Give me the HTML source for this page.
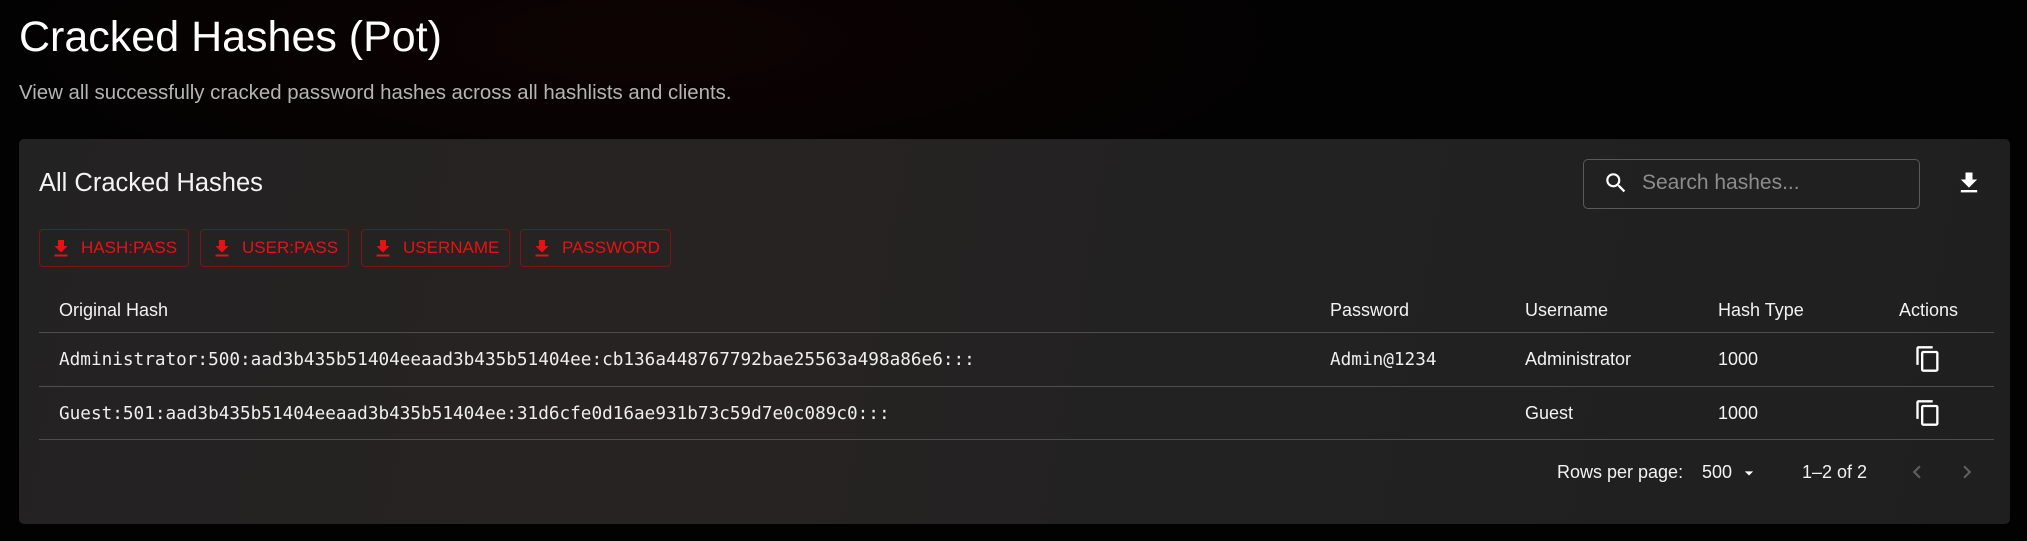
<!DOCTYPE html>
<html><head><meta charset="utf-8"><style>
*{margin:0;padding:0;box-sizing:border-box}
body{width:2027px;height:541px;overflow:hidden;background:#000;font-family:"Liberation Sans",sans-serif;color:#fff;position:relative}
.bg{position:absolute;inset:0;background:radial-gradient(ellipse 900px 250px at 650px 40px,rgba(40,5,5,0.3),rgba(0,0,0,0) 70%),#030202}
.a{position:absolute;white-space:nowrap}
.card{position:absolute;left:19px;top:139px;width:1991px;height:385px;border-radius:5px;background:linear-gradient(100deg,#232222 0%,#272322 35%,#222222 60%,#1f1f1f 100%)}
.btn{position:absolute;top:229px;height:38px;border:1px solid #7c1414;border-radius:4px;color:#e81212;font-size:17px;display:flex;align-items:center;padding-left:13px}
.btn svg{margin-right:12px}
.line{position:absolute;left:39px;width:1955px;height:1px;background:#4e4e4e}
.t{font-size:18px;color:#f2f2f2}
.m{font-family:"DejaVu Sans Mono","Liberation Mono",monospace;font-size:17.7px;letter-spacing:0;color:#eee}
</style></head><body>
<div class="bg"></div>
<div class="a" style="left:19px;top:13px;font-size:43px;color:#fff">Cracked Hashes (Pot)</div>
<div class="a" style="left:19px;top:82px;font-size:20.4px;color:#b4b4b4">View all successfully cracked password hashes across all hashlists and clients.</div>
<div class="card"></div>
<div class="a" style="left:39px;top:169px;font-size:25.5px;color:#f4f4f4">All Cracked Hashes</div>

<div class="btn" style="left:39px;width:150px"><svg width="16" height="18" viewBox="0 0 16 18"><path d="M5 1h6v6h3.5L8 13.5 1.5 7H5z" fill="#e81212"/><rect x="1.5" y="15.5" width="13" height="2" fill="#e81212"/></svg>HASH:PASS</div>
<div class="btn" style="left:200px;width:149px"><svg width="16" height="18" viewBox="0 0 16 18"><path d="M5 1h6v6h3.5L8 13.5 1.5 7H5z" fill="#e81212"/><rect x="1.5" y="15.5" width="13" height="2" fill="#e81212"/></svg>USER:PASS</div>
<div class="btn" style="left:361px;width:149px"><svg width="16" height="18" viewBox="0 0 16 18"><path d="M5 1h6v6h3.5L8 13.5 1.5 7H5z" fill="#e81212"/><rect x="1.5" y="15.5" width="13" height="2" fill="#e81212"/></svg>USERNAME</div>
<div class="btn" style="left:520px;width:151px"><svg width="16" height="18" viewBox="0 0 16 18"><path d="M5 1h6v6h3.5L8 13.5 1.5 7H5z" fill="#e81212"/><rect x="1.5" y="15.5" width="13" height="2" fill="#e81212"/></svg>PASSWORD</div>

<div class="a" style="left:1583px;top:159px;width:337px;height:50px;border:1px solid #5a5a5a;border-radius:5px"></div>
<svg class="a" style="left:1603px;top:170px" width="26" height="26" viewBox="0 0 24 24"><path d="M15.5 14h-.79l-.28-.27A6.47 6.47 0 0 0 16 9.5 6.5 6.5 0 1 0 9.5 16c1.61 0 3.09-.59 4.23-1.57l.27.28v.79l5 4.99L20.49 19zm-6 0C7.01 14 5 11.99 5 9.5S7.01 5 9.5 5 14 7.01 14 9.5 11.99 14 9.5 14" fill="#fff"/></svg>
<div class="a" style="left:1642px;top:171px;font-size:21px;color:#8c8c8c">Search hashes...</div>
<svg class="a" style="left:1955px;top:169px" width="28" height="28" viewBox="0 0 24 24"><path d="M19 9h-4V3H9v6H5l7 7zM5 18v2h14v-2z" fill="#fff"/></svg>

<div class="a t" style="left:59px;top:300px">Original Hash</div>
<div class="a t" style="left:1330px;top:300px">Password</div>
<div class="a t" style="left:1525px;top:300px">Username</div>
<div class="a t" style="left:1718px;top:300px">Hash Type</div>
<div class="a t" style="left:1899px;top:300px">Actions</div>
<div class="line" style="top:332px"></div>

<div class="a m" style="left:59px;top:350px">Administrator:500:aad3b435b51404eeaad3b435b51404ee:cb136a448767792bae25563a498a86e6:::</div>
<div class="a m" style="left:1330px;top:350px">Admin@1234</div>
<div class="a t" style="left:1525px;top:349px">Administrator</div>
<div class="a t" style="left:1718px;top:349px">1000</div>
<svg class="a" style="left:1914px;top:345px" width="28" height="28" viewBox="0 0 24 24"><path d="M16 1H4c-1.1 0-2 .9-2 2v14h2V3h12zm3 4H8c-1.1 0-2 .9-2 2v14c0 1.1.9 2 2 2h11c1.1 0 2-.9 2-2V7c0-1.1-.9-2-2-2m0 16H8V7h11z" fill="#fff"/></svg>
<div class="line" style="top:386px"></div>

<div class="a m" style="left:59px;top:404px">Guest:501:aad3b435b51404eeaad3b435b51404ee:31d6cfe0d16ae931b73c59d7e0c089c0:::</div>
<div class="a t" style="left:1525px;top:403px">Guest</div>
<div class="a t" style="left:1718px;top:403px">1000</div>
<svg class="a" style="left:1914px;top:399px" width="28" height="28" viewBox="0 0 24 24"><path d="M16 1H4c-1.1 0-2 .9-2 2v14h2V3h12zm3 4H8c-1.1 0-2 .9-2 2v14c0 1.1.9 2 2 2h11c1.1 0 2-.9 2-2V7c0-1.1-.9-2-2-2m0 16H8V7h11z" fill="#fff"/></svg>
<div class="line" style="top:439px"></div>

<div class="a t" style="left:1557px;top:462px">Rows per page:</div>
<div class="a t" style="left:1702px;top:462px">500</div>
<svg class="a" style="left:1739px;top:463px" width="20" height="20" viewBox="0 0 24 24"><path d="M7 10l5 5 5-5z" fill="#fff"/></svg>
<div class="a t" style="left:1802px;top:462px">1–2 of 2</div>
<svg class="a" style="left:1904px;top:459px" width="26" height="26" viewBox="0 0 24 24"><path d="M15.41 7.41 14 6l-6 6 6 6 1.41-1.41L10.83 12z" fill="#5e5e5e"/></svg>
<svg class="a" style="left:1954px;top:459px" width="26" height="26" viewBox="0 0 24 24"><path d="M10 6 8.59 7.41 13.17 12l-4.58 4.59L10 18l6-6z" fill="#5e5e5e"/></svg>
</body></html>
